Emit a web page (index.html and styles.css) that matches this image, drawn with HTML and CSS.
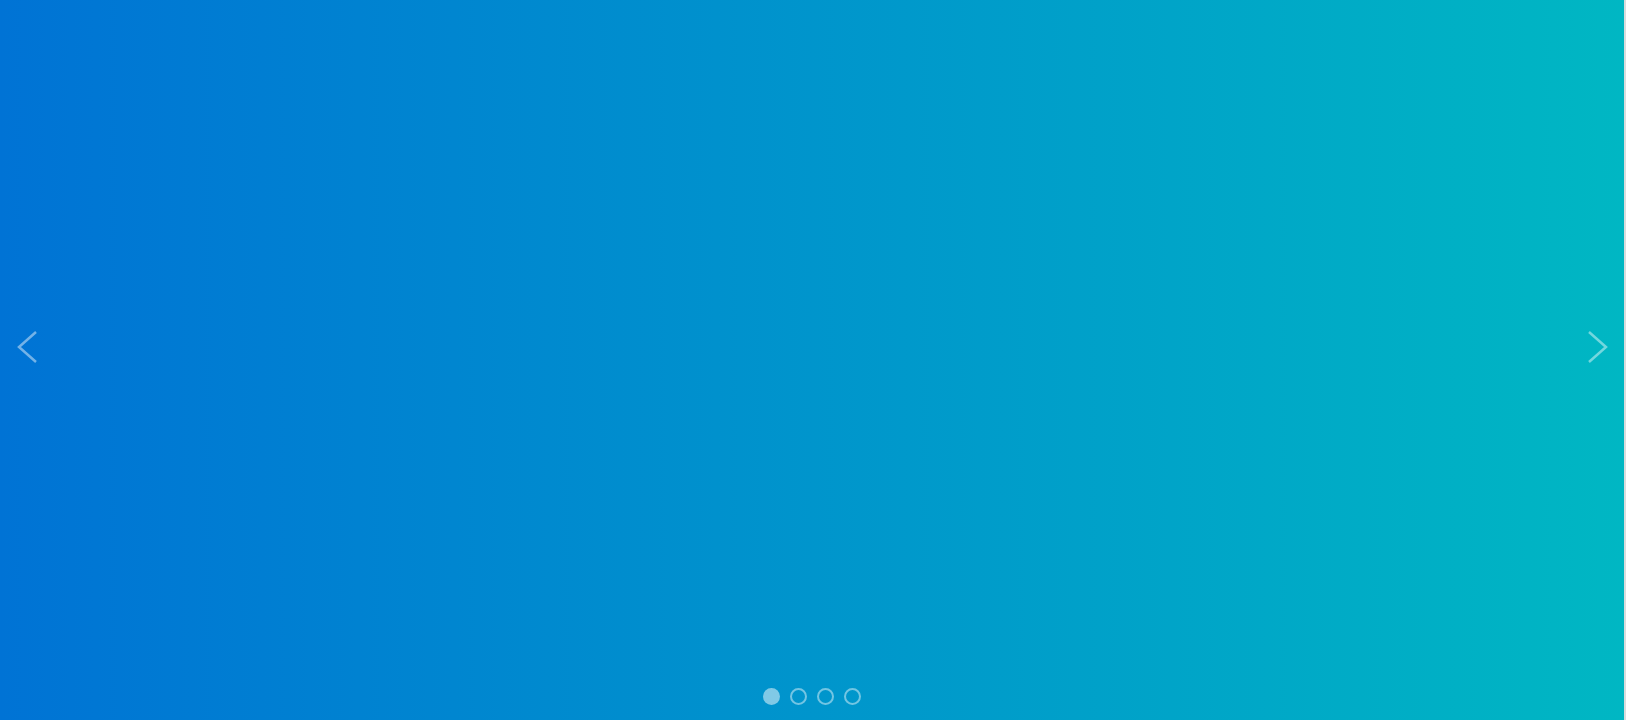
FILE: index.html
```html
<!DOCTYPE html>
<html lang="en">
<head>
<meta charset="utf-8">
<title>Carousel</title>
<link rel="stylesheet" href="styles.css">
</head>
<body>
<div class="page">
  <div class="carousel">
    <div class="slide"></div>
    <button class="nav nav-prev" aria-label="Previous">
      <svg width="28" height="40" viewBox="0 0 28 40"><polyline points="22,5 5,20 22,35" fill="none" stroke="currentColor" stroke-width="2.5"/></svg>
    </button>
    <button class="nav nav-next" aria-label="Next">
      <svg width="28" height="40" viewBox="0 0 28 40"><polyline points="5,5 22,20 5,35" fill="none" stroke="currentColor" stroke-width="2.5"/></svg>
    </button>
    <div class="indicators">
      <span class="dot active"></span>
      <span class="dot"></span>
      <span class="dot"></span>
      <span class="dot"></span>
    </div>
  </div>
  <div class="edge"></div>
</div>
</body>
</html>
```

FILE: styles.css
```css
html, body {
  margin: 0;
  padding: 0;
  overflow: hidden;
}
.page {
  display: flex;
  height: 720px;
  width: 1626px;
}
.carousel {
  position: relative;
  flex: 1;
  display: flex;
}
.slide {
  flex: 1;
  background: linear-gradient(to right, #0073d5 0%, #00b7c3 100%);
}
.edge {
  width: 2px;
  background: #d9dcdd;
}
.nav {
  position: absolute;
  top: 327px;
  width: 28px;
  height: 40px;
  padding: 0;
  border: 0;
  background: none;
  color: rgba(255, 255, 255, 0.45);
  cursor: pointer;
}
.nav svg {
  display: block;
}
.nav-prev {
  left: 14px;
}
.nav-next {
  right: 12px;
}
.indicators {
  position: absolute;
  left: 0;
  right: 0;
  bottom: 15px;
  display: flex;
  justify-content: center;
  gap: 10px;
}
.dot {
  width: 17px;
  height: 17px;
  box-sizing: border-box;
  border-radius: 50%;
  border: 2px solid rgba(255, 255, 255, 0.45);
}
.dot.active {
  background: rgba(255, 255, 255, 0.5);
  border-color: transparent;
}
```
